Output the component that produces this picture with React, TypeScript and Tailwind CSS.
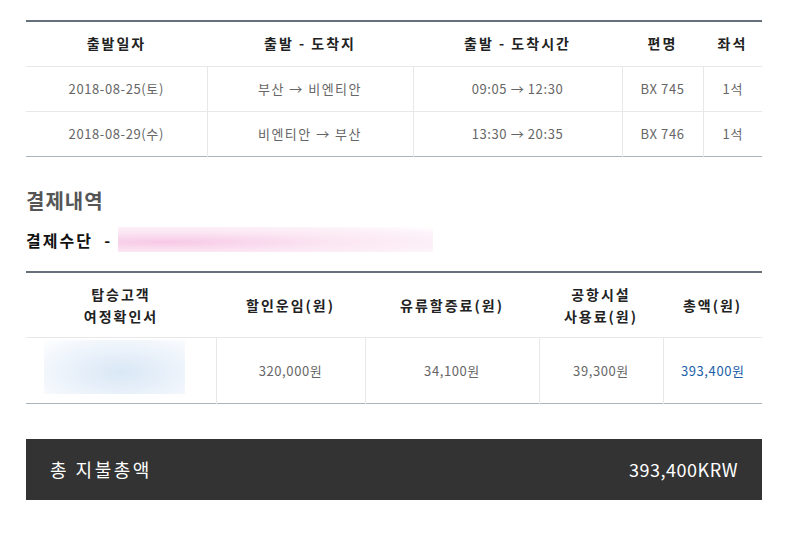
const font = { fontFamily: '"Noto Sans CJK KR", "Noto Sans", sans-serif' };

const flights = [
  { date: '2018-08-25(토)', route: '부산 → 비엔티안', time: '09:05 → 12:30', no: 'BX 745', seat: '1석' },
  { date: '2018-08-29(수)', route: '비엔티안 → 부산', time: '13:30 → 20:35', no: 'BX 746', seat: '1석' },
];

export default function App() {
  return (
    <div className="w-[787px] h-[535px] bg-white" style={font}>
      <div className="pt-[20px] px-[26px] w-[788px]">
        {/* Flight table */}
        <table className="w-[736px] table-fixed border-collapse border-t-2 border-t-[#66707c] border-b border-b-[#aab3bc]">
          <colgroup>
            <col className="w-[181px]" />
            <col className="w-[206px]" />
            <col className="w-[209px]" />
            <col className="w-[81px]" />
            <col className="w-[59px]" />
          </colgroup>
          <thead>
            <tr className="h-[45px] text-[14px] font-bold text-[#222] tracking-[2px]">
              <th>출발일자</th>
              <th>출발 - 도착지</th>
              <th>출발 - 도착시간</th>
              <th>편명</th>
              <th>좌석</th>
            </tr>
          </thead>
          <tbody>
            {flights.map((f, i) => (
              <tr key={i} className="h-[45px] text-[13px] text-[#666] text-center tracking-[0.6px] border-t border-[#e8e8e8]">
                <td>{f.date}</td>
                <td className="border-l border-[#e8e8e8] tracking-[1.5px]">{f.route}</td>
                <td className="border-l border-[#e8e8e8]">{f.time}</td>
                <td className="border-l border-[#e8e8e8]">{f.no}</td>
                <td className="border-l border-[#e8e8e8]">{f.seat}</td>
              </tr>
            ))}
          </tbody>
        </table>

        {/* Payment */}
        <h2 className="mt-[32px] text-[20px] font-bold text-[#555] leading-[24px] tracking-[1px]">결제내역</h2>
        <div className="mt-[14px] flex items-center h-[26px]">
          <span className="text-[16px] font-bold text-[#111] tracking-[2px]">결제수단 &nbsp;-</span>
          <div className="ml-[6px] w-[315px] h-[25px] bg-[radial-gradient(ellipse_at_15%_60%,#f7c9e6,#fbe6f3_45%,#fdf3f9_80%,#fff)]" />
        </div>

        <table className="mt-[18px] w-[736px] table-fixed border-collapse border-t-2 border-t-[#66707c] border-b border-b-[#aab3bc]">
          <colgroup>
            <col className="w-[190px]" />
            <col className="w-[149px]" />
            <col className="w-[174px]" />
            <col className="w-[124px]" />
            <col className="w-[99px]" />
          </colgroup>
          <thead>
            <tr className="h-[66px] text-[14px] font-bold text-[#222] leading-[22px] tracking-[2px]">
              <th>탑승고객<br />여정확인서</th>
              <th>할인운임(원)</th>
              <th>유류할증료(원)</th>
              <th>공항시설<br />사용료(원)</th>
              <th>총액(원)</th>
            </tr>
          </thead>
          <tbody>
            <tr className="h-[66px] text-[13px] text-[#666] text-center tracking-[0.6px] border-t border-[#e8e8e8]">
              <td>
                <div className="ml-[18px] mb-[8px] w-[141px] h-[54px] bg-[radial-gradient(ellipse_at_55%_60%,#d9e7f5,#e9f1fa_45%,#f6f9fd_80%,#fff)]" />
              </td>
              <td className="border-l border-[#e8e8e8]">320,000원</td>
              <td className="border-l border-[#e8e8e8]">34,100원</td>
              <td className="border-l border-[#e8e8e8]">39,300원</td>
              <td className="border-l border-[#e8e8e8] text-[#1a5ea8]">393,400원</td>
            </tr>
          </tbody>
        </table>

        {/* Total */}
        <div className="mt-[35px] h-[61px] bg-[#333] flex items-center justify-between px-[24px] text-white text-[18px]">
          <span className="tracking-[2.5px]">총 지불총액</span>
          <span className="tracking-[0.5px]">393,400KRW</span>
        </div>
      </div>
    </div>
  );
}
